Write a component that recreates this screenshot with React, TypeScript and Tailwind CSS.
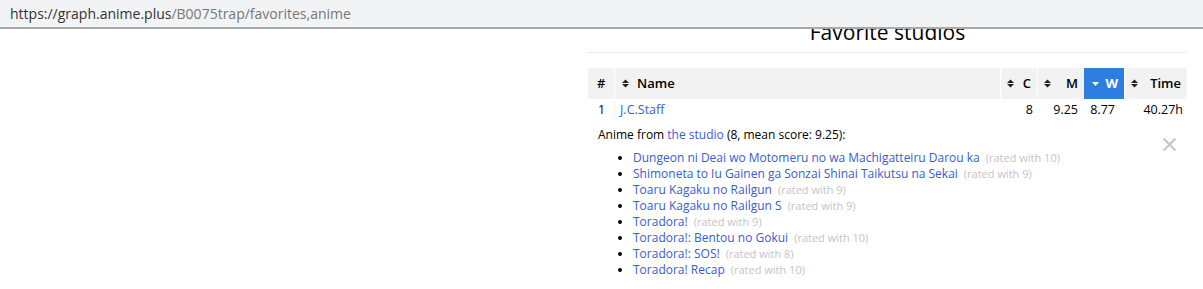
import React from "react";

const font = { fontFamily: '"Open Sans", "Noto Sans", sans-serif' };

function SortIcon({ active = false }: { active?: boolean }) {
  if (active) {
    return (
      <svg width="7" height="9" viewBox="0 0 7 9" className="shrink-0">
        <path d="M0 3h7L3.5 7z" fill="#fff" />
      </svg>
    );
  }
  return (
    <svg width="7" height="9" viewBox="0 0 7 9" className="shrink-0">
      <path d="M0 4L3.5 0.5L7 4z" fill="#222" />
      <path d="M0 5L3.5 8.5L7 5z" fill="#222" />
    </svg>
  );
}

const anime = [
  { title: "Dungeon ni Deai wo Motomeru no wa Machigatteiru Darou ka", score: 10 },
  { title: "Shimoneta to Iu Gainen ga Sonzai Shinai Taikutsu na Sekai", score: 9 },
  { title: "Toaru Kagaku no Railgun", score: 9 },
  { title: "Toaru Kagaku no Railgun S", score: 9 },
  { title: "Toradora!", score: 9 },
  { title: "Toradora!: Bentou no Gokui", score: 10 },
  { title: "Toradora!: SOS!", score: 8 },
  { title: "Toradora! Recap", score: 10 },
];

export default function App() {
  return (
    <div className="h-[289px] w-[1203px] overflow-hidden bg-white" style={font}>
      {/* address bar */}
      <div className="relative z-10 flex h-[29px] items-center border-b-2 border-[#a9a9a9] bg-[#f1f3f4] pl-[10px] text-[14px] text-[#777]">
        <span className="text-[#333]">https://graph.anime.plus</span>
        <span>/B0075trap/favorites,anime</span>
      </div>

      <div className="ml-[588px] w-[599px]">
        <h2 className="-mt-[14px] border-b border-[#e8e8e8] pb-[2px] text-center text-[21px] leading-[35px] text-black">
          Favorite studios
        </h2>

        <div className="mt-[15px] flex h-[31px] gap-px text-[13px] font-semibold text-black">
          <div className="flex w-[26px] items-center bg-[#f2f2f2] pl-[9px]">#</div>
          <div className="flex w-[385px] items-center gap-[8px] bg-[#f2f2f2] pl-[7px]">
            <SortIcon />
            <span>Name</span>
          </div>
          <div className="flex w-[36px] items-center justify-between bg-[#f2f2f2] px-[6px]">
            <SortIcon />
            <span>C</span>
          </div>
          <div className="-mr-px flex w-[46px] items-center justify-between bg-[#f2f2f2] pl-[6px] pr-[6px]">
            <SortIcon />
            <span>M</span>
          </div>
          <div className="flex w-[40px] items-center justify-between bg-[#2d7ee0] pl-[8px] pr-[6px] font-bold text-white">
            <SortIcon active />
            <span>W</span>
          </div>
          <div className="flex w-[62px] items-center justify-between bg-[#f2f2f2] pl-[6px] pr-[6px]">
            <SortIcon />
            <span>Time</span>
          </div>
        </div>

        <div className="flex h-[21px] items-end text-[12.5px] text-black">
          <div className="w-[27px] border-r border-[#f2f2f2] pl-[10px]">1</div>
          <div className="w-[386px] pl-[5px]">
            <a className="text-[#3b5bd0]">J.C.Staff</a>
          </div>
          <div className="w-[37px] pr-[5px] text-right">8</div>
          <div className="w-[46px] pr-[6px] text-right">9.25</div>
          <div className="w-[41px] pr-[10px] text-right">8.77</div>
          <div className="w-[62px] pr-[4px] text-right">40.27h</div>
        </div>

        <div className="relative pl-[10px] pt-[7px] text-[12px] text-black">
          <button className="absolute right-[10px] top-[17px] text-[#c8c8c8]" aria-label="close">
            <svg width="15" height="15" viewBox="0 0 15 15">
              <path d="M1.5 1.5L13.5 13.5M13.5 1.5L1.5 13.5" stroke="currentColor" strokeWidth="2.4" />
            </svg>
          </button>
          <p className="leading-[16px]">
            Anime from <a className="text-[#3b5bd0]">the studio</a> (8, mean score: 9.25):
          </p>
          <ul className="mt-[7px] list-disc pl-[35px] leading-[16px] marker:text-black">
            {anime.map((a) => (
              <li key={a.title}>
                <a className="text-[#3b5bd0]">{a.title}</a>
                <span className="ml-[6px] text-[11px] text-[#c4c4c4]">(rated with {a.score})</span>
              </li>
            ))}
          </ul>
        </div>
      </div>
    </div>
  );
}
